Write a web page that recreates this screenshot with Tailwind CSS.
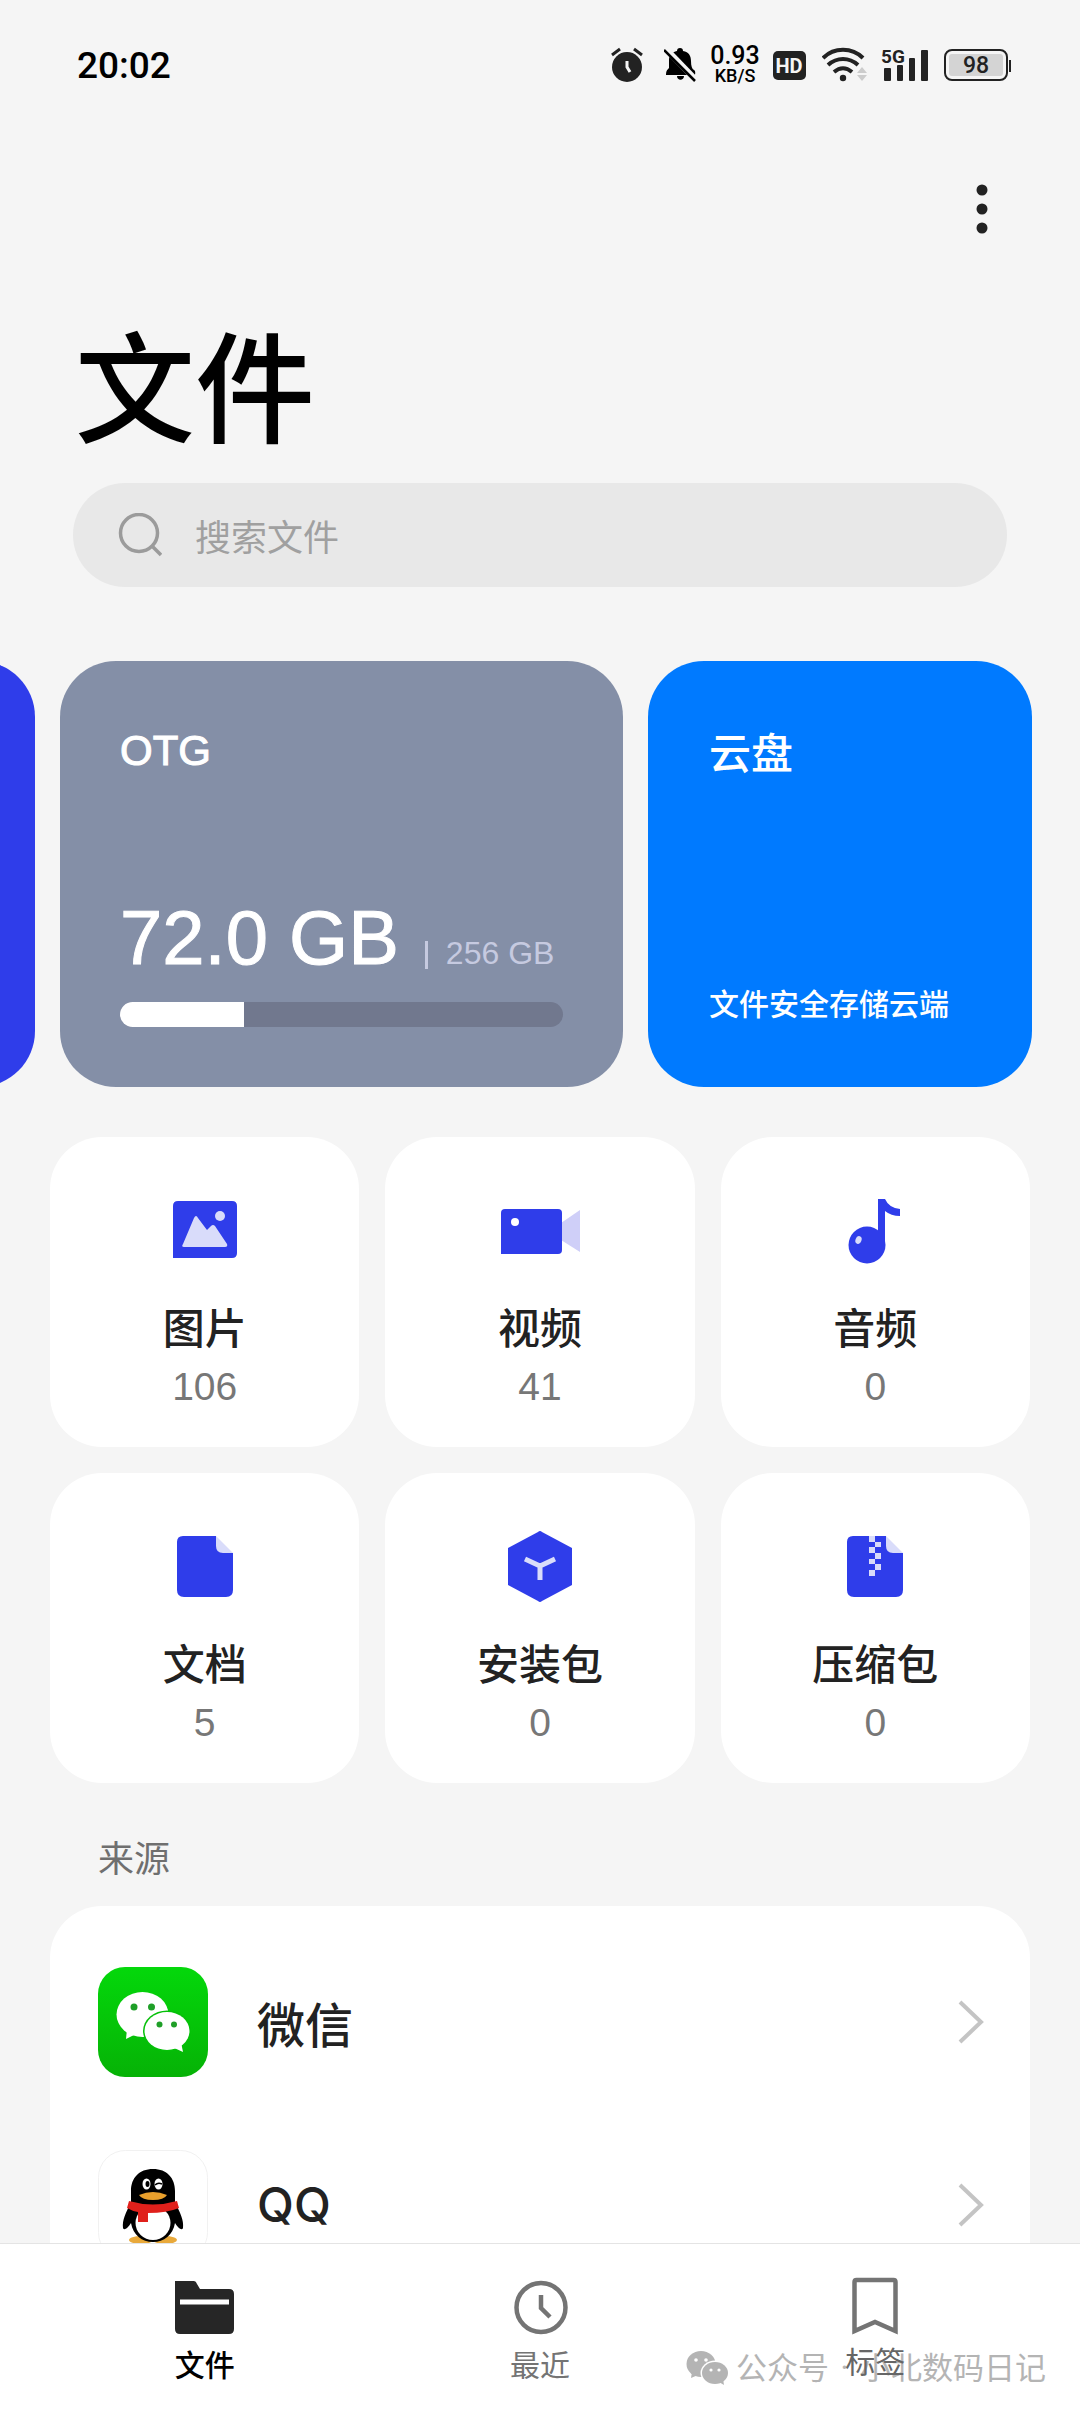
<!DOCTYPE html>
<html lang="zh-CN">
<head>
<meta charset="utf-8">
<meta name="viewport" content="width=device-width, initial-scale=1">
<title>文件</title>
<script src="https://cdn.jsdelivr.net/npm/@tailwindcss/browser@4"></script>
</head>
<body class="flex h-screen flex-col overflow-hidden bg-[#f5f5f5] font-['Noto_Sans_CJK_SC',sans-serif] text-[#222]">

<!-- Status bar -->
<header class="flex h-[130px] shrink-0 items-center justify-between pr-[69px] pl-[77px] font-[Roboto,sans-serif] text-black">
  <time class="text-[37px] leading-none font-medium">20:02</time>
  <div class="flex items-center gap-[14px]">
    <svg class="h-[36px] w-[39px]" viewBox="0 0 39 36" fill="none" aria-label="闹钟"><circle cx="16" cy="20" r="15" fill="#222"/><path d="M1 8 9 2M23 2l8 6" stroke="#222" stroke-width="3"/><path d="M16 14v6l3 5" stroke="#f5f5f5" stroke-width="3"/></svg>
    <svg class="h-[36px] w-[33px]" viewBox="0 0 33 36" aria-label="静音"><path d="M16 1c2 0 3 1 3 3 6 1 8 5 8 10 0 5 1 8 3 9 2 1 1 5 1 5H2c0-4 1-5 3-7V13c0-5 3-8 8-9 0-2 1-3 3-3zM13 29h7c0 5-7 5-7 0z" fill="#000"/><path d="M1 1l31 32" stroke="#f5f5f5" stroke-width="6"/><path d="M0 3l31 31" stroke="#000" stroke-width="2.5"/></svg>
    <div class="flex w-[48px] flex-col items-center">
      <span class="text-[25px] leading-[22px] font-medium">0.93</span>
      <span class="text-[18px] leading-[18px] font-medium">KB/S</span>
    </div>
    <svg class="h-[36px] w-[35px]" viewBox="0 0 35 36"><rect y="4" width="33" height="29" rx="5" fill="#222"/><text x="16" y="26" text-anchor="middle" font-size="20" font-weight="700" fill="#f5f5f5">HD</text></svg>
    <svg class="h-[36px] w-[45px]" viewBox="0 0 45 36" fill="none" aria-label="Wi-Fi"><g stroke="#222" stroke-width="4"><path d="M1 11c11-11 29-11 40 0"/><path d="M6 18c9-8 21-8 30 0"/><path d="M12 25c6-5 12-5 18 0"/></g><circle cx="21" cy="31" r="3.2" fill="#222"/><path d="M35 26l5-6 5 6zM35 28h10l-5 6z" fill="#ccc"/></svg>
    <svg class="h-[36px] w-[49px]" viewBox="0 0 49 36"><text x="0" y="16" font-size="19" font-weight="700" fill="#222">5G</text><g fill="#222"><rect x="3" y="21" width="7" height="13" rx="1"/><rect x="16" y="18" width="6" height="16" rx="1"/><rect x="28" y="11" width="6" height="23" rx="1"/><rect x="40" y="3" width="7" height="31" rx="1"/></g></svg>
    <svg class="h-[36px] w-[67px]" viewBox="0 0 67 36"><rect x="1" y="3" width="62" height="30" rx="7" fill="#f5f5f5" stroke="#222" stroke-width="2"/><rect x="5" y="7" width="54" height="22" rx="3" fill="#d4d4d4"/><rect x="65" y="13" width="2" height="12" fill="#222"/><text x="32" y="26" text-anchor="middle" font-size="23" font-weight="500" fill="#222">98</text></svg>
  </div>
</header>

<main class="min-h-0 flex-1 overflow-y-auto [scrollbar-width:none]">
  <div class="flex h-[158px] items-center justify-end pr-[68px]">
    <button type="button" aria-label="更多选项" class="flex w-[60px] justify-center">
      <svg class="h-[60px] w-[12px]" viewBox="0 0 12 60" fill="#222"><circle cx="6" cy="11" r="5.5"/><circle cx="6" cy="30" r="5.5"/><circle cx="6" cy="49" r="5.5"/></svg>
    </button>
  </div>

  <h1 class="px-[75px] text-[120px] leading-[188px] font-medium text-black">文件</h1>

  <label class="mx-[73px] mt-[7px] flex h-[104px] items-center gap-[33px] rounded-full bg-[#e8e8e8] pl-[45px]">
    <svg class="h-[44px] w-[44px]" viewBox="0 0 44 44" fill="none" stroke="#9b9b9b" stroke-width="3.5" aria-hidden="true"><circle cx="21" cy="20" r="18.500"/><path d="M34 33l9 9"/></svg>
    <input type="search" placeholder="搜索文件" aria-label="搜索文件" class="min-w-0 flex-1 bg-transparent text-[36px] leading-[52px] outline-none placeholder:text-[#a0a0a0]">
  </label>

  <!-- Storage cards -->
  <section class="mt-[74px] flex h-[426px] gap-[25px] pr-[48px] text-white">
    <div class="flex w-[35px] shrink-0 justify-end overflow-hidden">
      <div class="w-[563px] shrink-0 rounded-[56px] bg-[#2f3dea]"></div>
    </div>
    <article class="flex min-w-0 flex-1 flex-col justify-between rounded-[56px] bg-[#848fa7] px-[60px] pt-[60px] pb-[60px] font-['Liberation_Sans',sans-serif]">
      <h2 class="text-[42px] leading-[60px] [-webkit-text-stroke:1px_white]">OTG</h2>
      <div>
        <p class="flex items-baseline leading-[88px] whitespace-nowrap">
          <span class="text-[76px] [-webkit-text-stroke:1px_white]">72.0 GB</span>
          <span class="mb-[28px] ml-[26px] h-[28px] w-[3px] self-end bg-[#c6cae0]"></span>
          <span class="ml-[18px] text-[32px] text-[#c6cae0]">256 GB</span>
        </p>
        <div class="mt-[5px] h-[25px] overflow-hidden rounded-full bg-[#71788e]" role="progressbar" aria-label="OTG" aria-valuenow="28" aria-valuemin="0" aria-valuemax="100"><div class="h-full bg-white" style="width:28.1%"></div></div>
      </div>
    </article>
    <article class="flex w-[384px] shrink-0 flex-col justify-between rounded-[56px] bg-[#007aff] px-[61px] pt-[60px] pb-[60px]">
      <h2 class="text-[42px] leading-[60px] font-medium">云盘</h2>
      <p class="text-[30px] leading-[50px] font-medium whitespace-nowrap">文件安全存储云端</p>
    </article>
  </section>

  <!-- Categories -->
  <section class="mt-[50px] grid grid-cols-3 gap-[26px] px-[50px] text-center">
    <a href="#" class="flex h-[310px] flex-col items-center rounded-[52px] bg-white pt-[56px]">
      <svg class="h-[76px] w-[80px]" viewBox="0 0 80 76"><path d="M13 8h54q5 0 5 5v47q0 5-5 5H8V13q0-5 5-5z" fill="#2f3dea"/><path d="M18 51 29 25q2-4 4 0l9 12 4-4q2-2 4 0l12 18q1 3-2 3H19q-3 0-1-3z" fill="#d9dcfa"/><circle cx="55" cy="23" r="5" fill="#d9dcfa"/></svg>
      <span class="mt-[27px] text-[42px] leading-[60px] font-medium">图片</span>
      <span class="font-['Liberation_Sans',sans-serif] text-[39px] leading-[62px] text-[#777]">106</span>
    </a>
    <a href="#" class="flex h-[310px] flex-col items-center rounded-[52px] bg-white pt-[56px]">
      <svg class="h-[76px] w-[80px]" viewBox="0 0 80 76"><path d="M61 30 80 17v42L61 47z" fill="#cfcff8"/><path d="M5 16h53q4 0 4 4v37q0 4-4 4H1V20q0-4 4-4z" fill="#2f3dea"/><circle cx="15" cy="29" r="4" fill="#fff"/></svg>
      <span class="mt-[27px] text-[42px] leading-[60px] font-medium">视频</span>
      <span class="font-['Liberation_Sans',sans-serif] text-[39px] leading-[62px] text-[#777]">41</span>
    </a>
    <a href="#" class="flex h-[310px] flex-col items-center rounded-[52px] bg-white pt-[56px]">
      <svg class="h-[76px] w-[80px]" viewBox="0 0 80 76"><g fill="#2f3dea"><circle cx="32" cy="52" r="18.5"/><path d="M43 6h7q4 9 15 10v7q-9 0-15-5v34h-7z"/></g><ellipse cx="23.500" cy="47" rx="3" ry="4" transform="rotate(20 23.500 47)" fill="#d9dcfa"/></svg>
      <span class="mt-[27px] text-[42px] leading-[60px] font-medium">音频</span>
      <span class="font-['Liberation_Sans',sans-serif] text-[39px] leading-[62px] text-[#777]">0</span>
    </a>
    <a href="#" class="flex h-[310px] flex-col items-center rounded-[52px] bg-white pt-[56px]">
      <svg class="h-[76px] w-[80px]" viewBox="0 0 80 76"><path d="M51 7 68 24H51z" fill="#d9dcfa"/><path d="M18 7h33v10q0 7 7 7h10v37q0 7-7 7H19q-7 0-7-7V13q0-6 6-6z" fill="#2f3dea"/></svg>
      <span class="mt-[27px] text-[42px] leading-[60px] font-medium">文档</span>
      <span class="font-['Liberation_Sans',sans-serif] text-[39px] leading-[62px] text-[#777]">5</span>
    </a>
    <a href="#" class="flex h-[310px] flex-col items-center rounded-[52px] bg-white pt-[56px]">
      <svg class="h-[76px] w-[80px]" viewBox="0 0 80 76"><path d="M38 3q2-2 4 0l30 16v37L42 72q-2 2-4 0L8 56V19z" fill="#2f3dea"/><path d="M25 30l15 7 15-7M40 36v15" fill="none" stroke="#d9dcfa" stroke-width="5"/></svg>
      <span class="mt-[27px] text-[42px] leading-[60px] font-medium">安装包</span>
      <span class="font-['Liberation_Sans',sans-serif] text-[39px] leading-[62px] text-[#777]">0</span>
    </a>
    <a href="#" class="flex h-[310px] flex-col items-center rounded-[52px] bg-white pt-[56px]">
      <svg class="h-[76px] w-[80px]" viewBox="0 0 80 76"><path d="M51 7 68 24H51z" fill="#d9dcfa"/><path d="M18 7h33v10q0 7 7 7h10v37q0 7-7 7H19q-7 0-7-7V13q0-6 6-6z" fill="#2f3dea"/><path d="M34 7h6v6h-6zM40 13h6v5h-6zM34 18h6v6h-6zM40 24h6v6h-6zM34 30h6v5h-6zM40 35h6v6h-6zM34 41h6v6h-6z" fill="#d9dcfa"/></svg>
      <span class="mt-[27px] text-[42px] leading-[60px] font-medium">压缩包</span>
      <span class="font-['Liberation_Sans',sans-serif] text-[39px] leading-[62px] text-[#777]">0</span>
    </a>
  </section>

  <!-- Sources -->
  <h2 class="mt-[47px] px-[98px] text-[36px] leading-[52px] text-[#6f6f6f]">来源</h2>
  <ul class="mx-[50px] mt-[24px] rounded-[52px] bg-white pt-[24px]">
    <li><a href="#" class="flex h-[183px] items-center pr-[46px] pl-[48px]">
      <svg class="h-[110px] w-[110px]" viewBox="0 0 110 110"><defs><linearGradient id="g" x1="0" y1="0" x2="0" y2="1"><stop offset="0" stop-color="#04d80b"/><stop offset="1" stop-color="#06b206"/></linearGradient></defs><rect width="110" height="110" rx="27" fill="url(#g)"/><g fill="#fff"><ellipse cx="44.500" cy="47.500" rx="26" ry="22.500"/><path d="M29 62l-1 10 12-6z"/></g><ellipse cx="69" cy="64" rx="24" ry="20.500" fill="#05c008"/><g fill="#fff"><ellipse cx="69" cy="64" rx="22.500" ry="19"/><path d="M74 80l11 5-2-10z"/></g><g fill="#1f9f28"><circle cx="36" cy="40" r="3.500"/><circle cx="53.500" cy="40" r="3.500"/><circle cx="61.500" cy="57.500" r="3"/><circle cx="76" cy="57.500" r="3"/></g></svg>
      <span class="ml-[49px] flex-1 text-[48px] leading-[70px] font-medium">微信</span>
      <svg class="h-[44px] w-[26px]" viewBox="0 0 26 44" fill="none" stroke="#c4c4c4" stroke-width="4"><path d="M2 2l21 20L2 42"/></svg>
    </a></li>
    <li><a href="#" class="flex h-[183px] items-center pr-[46px] pl-[48px]">
      <svg class="h-[110px] w-[110px]" viewBox="0 0 110 110"><rect x=".5" y=".5" width="109" height="109" rx="27" fill="#fff" stroke="#f1f1f1"/><ellipse cx="43" cy="90" rx="12" ry="4" fill="#e9a93a"/><ellipse cx="67" cy="90" rx="12" ry="4" fill="#e9a93a"/><path d="M55 19c14 0 22 9 22 22v12c5 9 9 17 8 25-1 3-5 0-8-5-2 12-11 19-22 19s-20-7-22-19c-3 5-7 8-8 5-1-8 3-16 8-25V41c0-13 8-22 22-22z" fill="#000"/><ellipse cx="55" cy="73" rx="17.500" ry="17" fill="#fff"/><ellipse cx="48.500" cy="34" rx="4" ry="5.500" fill="#fff"/><ellipse cx="60.500" cy="34" rx="4" ry="5.500" fill="#fff"/><ellipse cx="49.500" cy="34" rx="2" ry="3" fill="#000"/><path d="M57 35q3-3 7-1" fill="none" stroke="#000" stroke-width="1.500"/><path d="M41 45q14-6 28 0-3 5-14 5t-14-5z" fill="#e9a02c"/><path d="M31 51q24 7 48 0l2 7q-12 5-31 5v9H40V62q-6-1-11-4z" fill="#e0201b"/></svg>
      <span class="ml-[49px] flex-1 font-[Inter,sans-serif] text-[48px] leading-[70px] font-medium">QQ</span>
      <svg class="h-[44px] w-[26px]" viewBox="0 0 26 44" fill="none" stroke="#c4c4c4" stroke-width="4"><path d="M2 2l21 20L2 42"/></svg>
    </a></li>
  </ul>
</main>

<!-- Bottom tabs -->
<nav class="relative h-[171px] shrink-0 border-t border-[#e4e4e4] bg-white">
  <div class="absolute right-[34px] bottom-[23px] flex items-center gap-[7px] text-[31px] leading-[44px] whitespace-nowrap text-[#b4b4b4]">
    <svg class="h-[36px] w-[43px]" viewBox="0 0 43 36"><g fill="#b4b4b4"><ellipse cx="15" cy="14" rx="14.500" ry="13"/><path d="M6 22l-1 6 7-3z"/></g><ellipse cx="29" cy="23" rx="14.500" ry="12.500" fill="#fff"/><g fill="#b4b4b4"><ellipse cx="29" cy="23" rx="13" ry="11"/><path d="M33 32l5 3-1-6z"/></g><g fill="#fff"><circle cx="10" cy="10" r="1.800"/><circle cx="20" cy="10" r="1.800"/><circle cx="25" cy="20" r="1.600"/><circle cx="33" cy="20" r="1.600"/></g></svg>
    <span>公众号<span class="inline-block w-[31px] text-center font-[Roboto,sans-serif]"> · </span>小北数码日记</span>
  </div>
  <div class="relative grid grid-cols-3 gap-[26px] px-[50px] pt-[30px] text-[30px] leading-[44px]">
    <a href="#" aria-current="page" class="flex flex-col items-center gap-[5px] font-medium text-black">
      <svg class="h-[62px] w-[62px]" viewBox="0 0 62 62"><path d="M1 7h19q2 0 3 3l3 5h29q5 0 5 5v35q0 5-5 5H6q-5 0-5-5z" fill="#262626"/><path d="M6 25.500h49v5H6z" fill="#fff"/></svg>
      <span>文件</span>
    </a>
    <a href="#" class="flex flex-col items-center gap-[5px] text-[#747474]">
      <svg class="h-[62px] w-[62px]" viewBox="0 0 62 62" fill="none" stroke="#747474" stroke-width="4.500"><circle cx="32" cy="33.500" r="24.500"/><path d="M32 21v13l9 9"/></svg>
      <span>最近</span>
    </a>
    <a href="#" class="flex flex-col items-center gap-[2px] text-[#666]">
      <svg class="h-[62px] w-[62px]" viewBox="0 0 62 62" fill="none" stroke="#747474" stroke-width="4.500"><path d="M10.500 8q0-2 2-2h37q2 0 2 2v49L31 48l-20.500 9z"/></svg>
      <span>标签</span>
    </a>
  </div>
</nav>
</body>
</html>
